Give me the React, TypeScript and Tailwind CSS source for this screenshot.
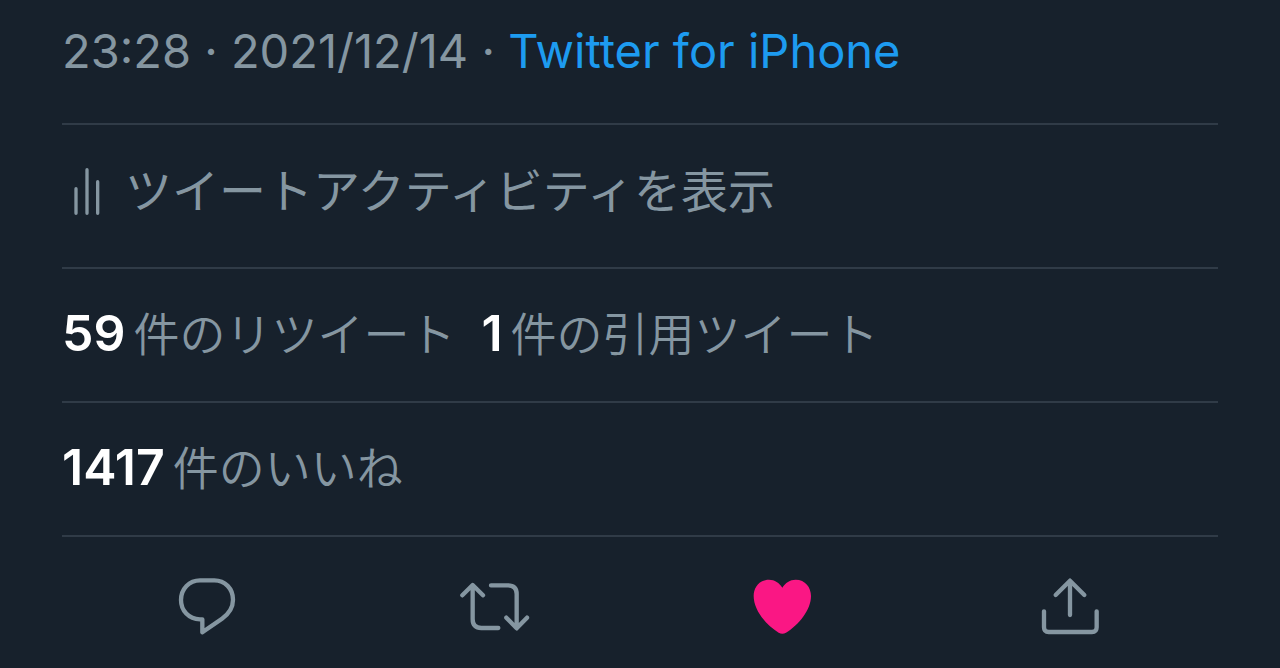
import type { ReactNode } from "react";

function Row({ children }: { children: ReactNode }) {
  return (
    <div className="flex h-[134px] items-center gap-[26px] border-b-2 border-[#303b47] pb-1">
      {children}
    </div>
  );
}

function Stat({ count, label }: { count: string; label: string }) {
  return (
    <a href="#" className="flex items-baseline gap-2 leading-[70px]">
      <strong className="text-[50px] font-semibold text-white">{count}</strong>
      <span className="text-[46px] font-[350]">{label}</span>
    </a>
  );
}

function Action({ label, viewBox, children }: { label: string; viewBox: string; children: ReactNode }) {
  return (
    <button type="button" aria-label={label} className="flex justify-center">
      <svg
        viewBox={viewBox}
        className="size-[72px]"
        fill="none"
        stroke="currentColor"
        strokeWidth="13"
        strokeLinecap="round"
        strokeLinejoin="round"
      >
        {children}
      </svg>
    </button>
  );
}

export default function App() {
  return (
    <main
      lang="ja"
      className="min-h-screen bg-[#17212c] px-[62px] font-['Inter','Noto_Sans_CJK_JP',sans-serif] text-[47px] text-[#8596a1]"
    >
      <p className="border-b-2 border-[#303b47] pt-4 pb-[37px] leading-[70px]">
        23:28 · 2021/12/14 ·{" "}
        <a href="#" className="text-[#1d9bf0]">
          Twitter for iPhone
        </a>
      </p>
      <a href="#" className="flex h-36 items-start gap-6 border-b-2 border-[#303b47] pt-[42px]">
        <svg
          viewBox="98 52 84 144"
          className="ml-[11px] h-12 w-7"
          fill="none"
          stroke="currentColor"
          strokeWidth="10"
          strokeLinecap="round"
        >
          <path d="M107 117V191M140 60V191M172 96V191" />
        </svg>
        <span className="leading-12">ツイートアクティビティを表示</span>
      </a>
      <Row>
        <Stat count="59" label="件のリツイート" />
        <Stat count="1" label="件の引用ツイート" />
      </Row>
      <Row>
        <Stat count="1417" label="件のいいね" />
      </Row>
      <div className="grid grid-cols-4 pt-[33px] pr-1">
        <Action label="返信" viewBox="30 30 216 216">
          <path d="M120 61H163C195 61 219 86 219 119C219 144 207 161 186 176L127 217V178H120C86 177 63 152 63 120C63 87 88 61 120 61Z" />
        </Action>
        <Action label="リツイート" viewBox="54 30 216 216">
          <path d="M67 106L98 75L129 106M98 77V178Q98 204 124 204H175M153 76H204Q230 76 230 102V204M199 173L230 205L261 173" />
        </Action>
        <Action label="いいね" viewBox="48 30 216 216">
          <path
            fill="#fa1784"
            stroke="none"
            d="M157 83C148 68 134 59 117 59C88 59 71 82 71 108C71 149 107 195 146 218Q157 224 168 218C207 195 243 149 243 108C243 82 226 59 197 59C180 59 166 68 157 83Z"
          />
        </Action>
        <Action label="共有" viewBox="41 30 216 216">
          <path d="M106 105L149 62L192 105M149 64V165M71 154V202Q71 216 85 216H215Q229 216 229 202V154" />
        </Action>
      </div>
    </main>
  );
}
